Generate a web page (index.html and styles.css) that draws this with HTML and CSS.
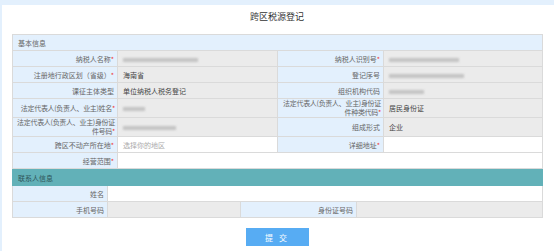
FILE: index.html
```html
<!DOCTYPE html>
<html lang="zh-CN">
<head>
  <meta charset="UTF-8">
  <meta name="viewport" content="width=device-width, initial-scale=1.0">
  <title>跨区税源登记</title>
  <link rel="stylesheet" href="styles.css">
</head>
<body>
  <!-- White panel holding the registration form -->
  <div class="page">
    <h1 class="title">跨区税源登记</h1>

    <!-- Basic info -->
    <table class="form-table">
      <colgroup>
        <col class="c-label1">
        <col class="c-value1">
        <col class="c-label2">
        <col class="c-value2">
      </colgroup>
      <tr class="section">
        <td colspan="4">基本信息</td>
      </tr>
      <tr>
        <th>纳税人名称<i>*</i></th>
        <td class="ro"><span class="mask w75"></span></td>
        <th>纳税人识别号<i>*</i></th>
        <td class="ro"><span class="mask w70"></span></td>
      </tr>
      <tr>
        <th>注册地行政区划（省级）<i>*</i></th>
        <td class="ro">海南省</td>
        <th>登记序号</th>
        <td class="ro"><span class="mask w75"></span></td>
      </tr>
      <tr>
        <th>课征主体类型</th>
        <td class="ro">单位纳税人税务登记</td>
        <th>组织机构代码</th>
        <td class="ro"><span class="mask w35"></span></td>
      </tr>
      <tr class="tall">
        <th class="tight">法定代表人(负责人、业主)姓名<i>*</i></th>
        <td class="ro"><span class="mask w22"></span></td>
        <th class="tight">法定代表人(负责人、业主)身份证<br>件种类代码<i>*</i></th>
        <td class="ro">居民身份证</td>
      </tr>
      <tr class="tall">
        <th class="tight">法定代表人(负责人、业主)身份证<br>件号码<i>*</i></th>
        <td class="ro"><span class="mask w53"></span></td>
        <th>组成形式</th>
        <td class="ro">企业</td>
      </tr>
      <tr>
        <th>跨区不动产所在地<i>*</i></th>
        <td class="placeholder">选择你的地区</td>
        <th>详细地址<i>*</i></th>
        <td></td>
      </tr>
      <tr>
        <th>经营范围<i>*</i></th>
        <td colspan="3"></td>
      </tr>
    </table>

    <!-- Contact info -->
    <table class="form-table">
      <colgroup>
        <col class="c-clabel1">
        <col class="c-cvalue1">
        <col class="c-clabel2">
        <col class="c-cvalue2">
      </colgroup>
      <tr class="section teal">
        <td colspan="4">联系人信息</td>
      </tr>
      <tr>
        <th>姓名</th>
        <td colspan="3"></td>
      </tr>
      <tr>
        <th>手机号码</th>
        <td class="ro"></td>
        <th>身份证号码</th>
        <td class="ro"></td>
      </tr>
    </table>

    <div class="actions">
      <button type="button" class="submit-btn">提 交</button>
    </div>
  </div>
</body>
</html>
```

FILE: styles.css
```css
/* Light blue frame around the white panel */
body {
  margin: 0;
  background-color: #e3f0fd;
  font-family: "Noto Sans CJK SC", "Noto Sans", sans-serif;
  color: #333;
}

.page {
  margin: 5px 0 0 2px;
  padding: 0 12px 0 10px;
  height: 246px;
  background-color: #fff;
}

.title {
  margin: 0;
  height: 29px;
  line-height: 24px;
  font-size: 9px;
  font-weight: normal;
  text-align: center;
  color: #333;
}

/* Form tables */
.form-table {
  width: 530px;
  border-collapse: collapse;
  table-layout: fixed;
  font-size: 7px;
}

.c-label1 { width: 105px; }
.c-value1 { width: 160px; }
.c-label2 { width: 106px; }
.c-value2 { width: 159px; }

.c-clabel1 { width: 95px; }
.c-cvalue1 { width: 133px; }
.c-clabel2 { width: 116px; }
.c-cvalue2 { width: 186px; }

.form-table tr {
  height: 16px;
}

.form-table tr.tall {
  height: 19px;
}

.form-table th,
.form-table td {
  border: 1px solid #dadada;
  padding: 0 4px;
  line-height: 8px;
  overflow: hidden;
}

.form-table th {
  background-color: #e3f0fd;
  font-weight: normal;
  text-align: right;
  color: #666;
  padding: 0 3px 0 0;
}

/* Long two-line labels sit a bit tighter */
.form-table th.tight {
  letter-spacing: -0.3px;
  line-height: 9px;
  padding-right: 2px;
  white-space: nowrap;
}

.form-table td {
  background-color: #fff;
  text-align: left;
  padding-left: 5px;
  color: #444;
}

.form-table td.ro {
  background-color: #ebebeb;
}

.form-table td.placeholder {
  color: #aaa;
}

.form-table th i {
  font-style: normal;
  color: #e33;
}

/* Section headers */
.form-table tr.section td {
  background-color: #e3f0fd;
  color: #666;
  padding-left: 5px;
}

.form-table tr.section.teal td {
  background-color: #62b1b8;
  border-color: #62b1b8;
  color: #2f5558;
}

/* Blurred sensitive values */
.mask {
  display: inline-block;
  height: 4px;
  vertical-align: middle;
  background-color: #c4c4c4;
  filter: blur(1px);
}

.w75 { width: 75px; }
.w70 { width: 70px; }
.w53 { width: 53px; }
.w35 { width: 35px; }
.w22 { width: 22px; }

/* Submit button */
.actions {
  display: flex;
  justify-content: center;
  margin-top: 10px;
}

.submit-btn {
  width: 63px;
  height: 18px;
  padding: 0;
  border: none;
  background-color: #57acf3;
  color: #fff;
  font-family: inherit;
  font-size: 8px;
  letter-spacing: 2px;
  cursor: pointer;
}
```
